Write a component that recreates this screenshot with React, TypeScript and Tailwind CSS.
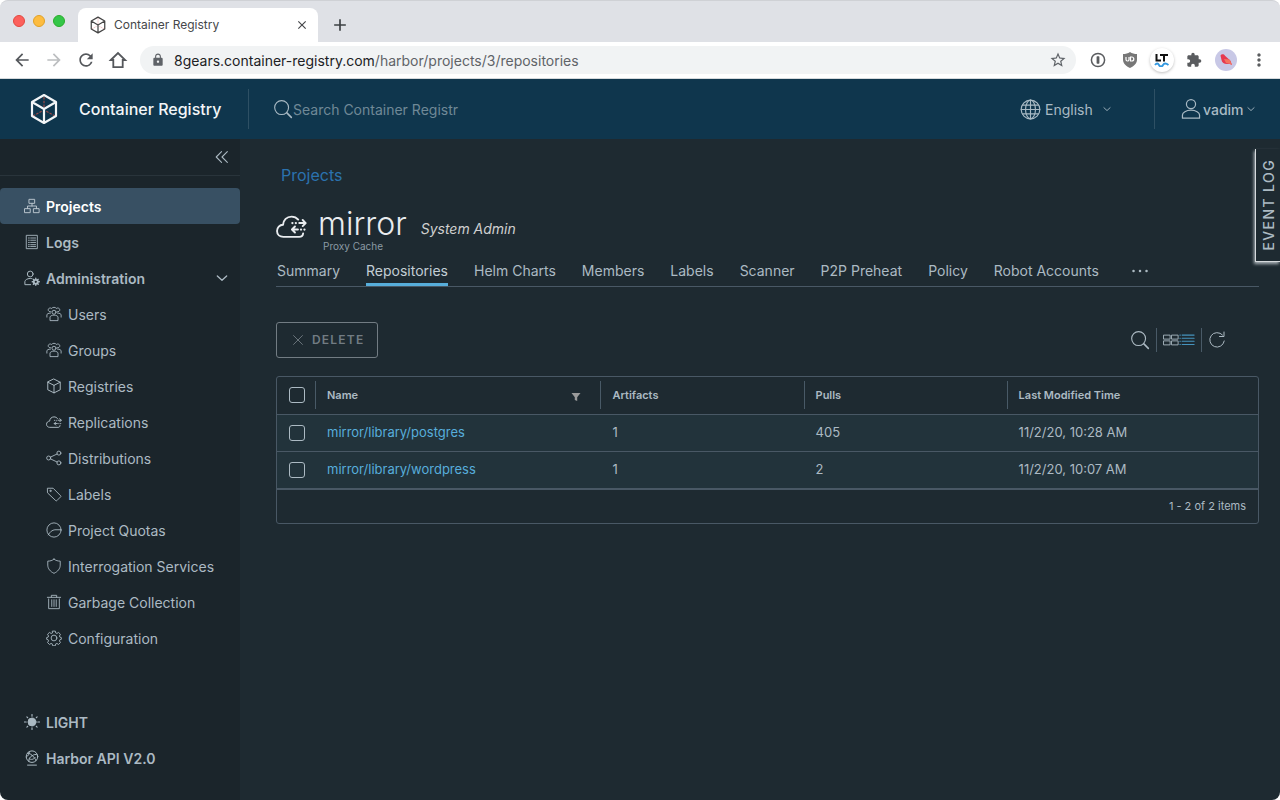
import type { ReactNode } from "react";
import {
  MdArrowBack,
  MdArrowForward,
  MdRefresh,
  MdLock,
  MdStarBorder,
  MdExtension,
  MdMoreVert,
  MdClose,
  MdAdd,
} from "react-icons/md";

type IconProps = { className?: string };

function Glyph({ className = "size-4", width = 2, children }: IconProps & { width?: number; children: ReactNode }) {
  return (
    <svg
      viewBox="0 0 36 36"
      className={`shrink-0 ${className}`}
      fill="none"
      stroke="currentColor"
      strokeWidth={width}
      strokeLinecap="round"
      strokeLinejoin="round"
      aria-hidden="true"
    >
      {children}
    </svg>
  );
}

const ProjectsIcon = () => (
  <Glyph width={2.2}>
    <path d="M12 3h12v9H12zM2 24h12v9H2zM22 24h12v9H22zM18 12v6M8 24v-6h20v6" />
  </Glyph>
);

const LogsIcon = () => (
  <Glyph>
    <path d="M6 3h24v30H6z" />
    <path d="M10 9h2M15 9h11M10 14h2M15 14h11M10 19h2M15 19h11M10 24h2M15 24h11M10 28h2M15 28h11" />
  </Glyph>
);

const AdminIcon = () => (
  <Glyph width={2.2}>
    <circle cx="14" cy="9" r="6.500" />
    <path d="M15 33H2v-7c0-3 5-7 12-7 1.500 0 2.500.2 4 .5" />
    <circle cx="26.500" cy="26.500" r="4.500" strokeWidth="4" />
    <path strokeWidth="3" d="M26.500 18.500v2M26.500 32.500v2M18.500 26.500h2M32.500 26.500h2M21 21l1.500 1.500M30.500 30.500L32 32M32 21l-1.500 1.500M22.500 30.500L21 32" />
  </Glyph>
);

const UsersIcon = () => (
  <Glyph>
    <circle cx="18" cy="14" r="4.500" />
    <path d="M9 32v-7c0-2 4-4.500 9-4.500s9 2.500 9 4.500v7z" />
    <path d="M11 13a4.500 4.500 0 1 1 1-8M25 13a4.500 4.500 0 1 0-1-8M13 5c2-3 8-3 10 0" />
    <path d="M2 25v-5c0-2 3-4 8-4M34 25v-5c0-2-3-4-8-4" />
  </Glyph>
);

const RegistryIcon = () => (
  <Glyph width={2.2}>
    <path d="M18 2.500L32 9.500v17L18 33.500 4 26.500v-17zM4 9.500l14 7 14-7M18 16.500v17" />
  </Glyph>
);

const CloudIcon = ({ className }: IconProps) => (
  <Glyph className={className} width={2.2}>
    <path d="M31.500 26c-.3 2.800-1.500 4-4.500 4H8.500C4.500 30 1.200 27.500 1.200 23.200c0-4 3-7.200 7-7.200C8.500 10.500 12.500 6.500 18 6.500c3.200 0 6 1.300 7.800 3.500" />
    <path d="M27 14h7M31 10.500l3.500 3.500-3.500 3.500M25.500 21.500H19M22 18l-3.500 3.500L22 25" />
    <path strokeWidth="2.600" d="M19 14h.1M23 14h.1M29 21.500h.1M33 21.500h.1" />
  </Glyph>
);

const ShareIcon = () => (
  <Glyph>
    <circle cx="6" cy="18" r="4.500" />
    <circle cx="29" cy="7" r="4.500" />
    <circle cx="29" cy="29" r="4.500" />
    <path d="M10 16l15-7M10 20l15 7" />
  </Glyph>
);

const TagIcon = () => (
  <Glyph>
    <path d="M4 5h12L33 22c.8.8.8 1.500 0 2.300L24.300 33c-.8.8-1.500.8-2.300 0L4 16z" />
    <circle cx="10" cy="11" r="1.500" />
  </Glyph>
);

const QuotaIcon = () => (
  <Glyph>
    <circle cx="18" cy="18" r="16" />
    <path d="M33 17.500H20C14 18 9 22 5 29" />
  </Glyph>
);

const ShieldIcon = () => (
  <Glyph>
    <path d="M18 2.500c4 3.500 9 4.500 14 4.500v9c0 8-5.500 14.500-14 18.500C9.500 30.500 4 24 4 16V7c5 0 10-1 14-4.500z" />
  </Glyph>
);

const TrashIcon = () => (
  <Glyph>
    <path d="M3 7.500h30M12 7V3h12v4M6 11v22h24V11M13 13v15M18 13v15M23 13v15" />
  </Glyph>
);

const GearIcon = () => (
  <Glyph>
    <circle cx="18" cy="18" r="6.500" />
    <path d="M15 2.500h6l1 4.300 2.500 1 3.800-2.300 4.200 4.200-2.300 3.800 1 2.500 3.300 1v4l-3.300 1-1 2.500 2.300 3.800-4.200 4.200-3.800-2.300-2.500 1-1 4.300h-6l-1-4.300-2.500-1-3.800 2.300-4.200-4.200 2.300-3.800-1-2.500-3.300-1v-4l3.300-1 1-2.500-2.300-3.800 4.200-4.200 3.800 2.300 2.500-1z" />
  </Glyph>
);

const SunIcon = () => (
  <Glyph>
    <circle cx="18" cy="18" r="9" fill="currentColor" />
    <path strokeWidth="2.500" d="M18 1v4M18 31v4M1 18h4M31 18h4M6.500 6.500l2 2M27.500 27.500l2 2M29.500 6.500l-2 2M8.500 27.500l-2 2" />
  </Glyph>
);

const ApiIcon = () => (
  <Glyph width={2.2}>
    <circle cx="18" cy="15" r="13" />
    <path d="M8 7c5 0 10 4 14 9s5 7 5 8M11 26c-1-6 2-10 7-13s8-4 12-2M12 4c0 5-2 9-7 12M12 20c4 2 9 2 13-3M8 34h20" />
  </Glyph>
);

const Chevron = ({ className }: IconProps) => (
  <Glyph className={className} width={4}>
    <path d="M4 12l14 13 14-13" />
  </Glyph>
);

const SearchIcon = ({ className }: IconProps) => (
  <Glyph className={className}>
    <circle cx="15.500" cy="15.500" r="12.500" />
    <path strokeWidth="2.800" d="M25 25l8 8" />
  </Glyph>
);

const GlobeIcon = () => (
  <Glyph className="size-[21px]">
    <circle cx="18" cy="18" r="16" />
    <ellipse cx="18" cy="18" rx="8.500" ry="16" />
    <path d="M18 2v32M2 18h32M4.500 10.500h27M4.500 25.500h27" />
  </Glyph>
);

const CubeLogo = ({ className, accent }: { className: string; accent: string }) => (
  <svg viewBox="0 0 28 32" className={`shrink-0 ${className}`} fill="none" aria-hidden="true">
    <path d="M14 4v11M3 23l9-5M25 23l-9-5" stroke={accent} strokeWidth="1.200" strokeDasharray="2.500 1.200" />
    <path d="M14 2l12 7v14l-12 7-12-7V9zM2 9l12 7 12-7M14 16v14" stroke="currentColor" strokeWidth="2.200" strokeLinejoin="round" />
  </svg>
);

function BrowserChrome() {
  return (
    <div className="shrink-0 bg-white">
      <div className="flex h-[42px] items-end rounded-t-lg border-t border-[#cfd1d5] bg-[#dfe1e6]">
        <div className="mb-[15px] ml-[13px] flex gap-2">
          <span className="size-3 rounded-full border border-[#e2483f] bg-[#fc605c]" />
          <span className="size-3 rounded-full border border-[#e0a127] bg-[#fdbc40]" />
          <span className="size-3 rounded-full border border-[#2aad2a] bg-[#34c648]" />
        </div>
        <div className="ml-[13px] flex h-[34px] w-60 items-center rounded-t-lg bg-white pr-[9px] pl-3">
          <CubeLogo className="h-[18px] w-4 text-[#444]" accent="#e8a0a0" />
          <span className="ml-2 flex-1 text-[12px] text-[#45474a]">Container Registry</span>
          <button type="button" aria-label="Close tab" className="text-[#45474a]">
            <MdClose className="size-3.5" />
          </button>
        </div>
        <button type="button" aria-label="New tab" className="mb-[7px] ml-3 text-[#3c4043]">
          <MdAdd className="size-5" />
        </button>
      </div>
      <div className="flex h-[37px] items-center border-b border-[#d5d9dc] pr-[11px] pl-3">
        <div className="flex items-center gap-3 text-[#55585c]">
          <button type="button" aria-label="Back"><MdArrowBack className="size-5" /></button>
          <button type="button" aria-label="Forward" className="text-[#bcbec0]"><MdArrowForward className="size-5" /></button>
          <button type="button" aria-label="Reload"><MdRefresh className="size-5" /></button>
          <button type="button" aria-label="Home">
            <svg viewBox="0 0 20 20" className="size-5" fill="none" stroke="currentColor" strokeWidth="1.800" aria-hidden="true">
              <path d="M2.800 10L10 3l7.200 7H14.700v7.200H5.300V10z" />
            </svg>
          </button>
        </div>
        <div className="ml-3 flex h-7 flex-1 items-center rounded-full bg-[#f1f3f4] pr-[9px] pl-[11px] text-[#5f6368]">
          <MdLock className="size-3.5 shrink-0" />
          <span className="ml-[9px] flex-1 text-[14px] text-[#5f6368]">
            <span className="text-[#202124]">8gears.container-registry.com</span>/harbor/projects/3/repositories
          </span>
          <button type="button" aria-label="Bookmark"><MdStarBorder className="size-[18px]" /></button>
        </div>
        <div className="ml-3.5 flex items-center text-[#5a5c5f]">
          <svg viewBox="0 0 16 16" className="size-4" fill="none" aria-hidden="true">
            <circle cx="8" cy="8" r="6.600" stroke="currentColor" strokeWidth="1.500" />
            <rect x="6.600" y="4.300" width="2.800" height="7.400" rx=".6" fill="currentColor" />
          </svg>
          <svg viewBox="0 0 16 16" className="ml-4 size-4" aria-hidden="true">
            <path d="M8 0c2 1.500 4.500 2 7 2v5.500c0 4-3 6.500-7 8.500-4-2-7-4.500-7-8.500V2c2.500 0 5-.5 7-2z" fill="#777" />
            <path d="M4 5v2.500a1.500 1.500 0 0 0 3 0V5M8.500 5v4h1.300a2 2 0 0 0 0-4z" stroke="#fff" strokeWidth="1.200" fill="none" />
          </svg>
          <span className="ml-3 flex size-6 items-center justify-center rounded-full bg-white shadow-[0_1px_3px_#00000040]">
            <svg viewBox="0 0 16 14" className="h-3.5 w-4" fill="none" aria-hidden="true">
              <path d="M2.500 1v6.500H7M6 2h8M10 2v6.500" stroke="#111" strokeWidth="2" />
              <path d="M1 12c1.500-2 3-2 4 0s3 2 4 0 3-2 5.500 0" stroke="#3398e0" strokeWidth="1.800" />
            </svg>
          </span>
          <MdExtension className="ml-3 size-4" />
          <svg viewBox="0 0 22 22" className="ml-[13px] size-[22px]" aria-hidden="true">
            <circle cx="11" cy="11" r="11" fill="#c8c8e6" />
            <path d="M5.500 6.500C6.500 4.800 9 5 10 6.800l5.500 5L17 16l-2.500-1.200L12 15c-3 0-5-1.500-5.500-4z" fill="#e63950" />
            <path d="M9 10l5.500.5L17 16l-3-1.500-3-.5z" fill="#f4725f" />
          </svg>
          <button type="button" aria-label="Menu" className="ml-3"><MdMoreVert className="size-5" /></button>
        </div>
      </div>
    </div>
  );
}

function AppHeader() {
  return (
    <header className="flex h-[60px] shrink-0 items-center bg-[#0f364d] text-[#a9bac4]">
      <div className="flex h-10 w-[249px] items-center border-r border-[#2e5064] pl-[30px] text-[#f3f6f8]">
        <CubeLogo className="h-8 w-7" accent="#9c4a48" />
        <h1 className="ml-[21px] text-[16px] leading-6 font-medium">Container Registry</h1>
      </div>
      <label className="ml-6 flex flex-1 items-center">
        <SearchIcon className="size-5" />
        <input
          type="text"
          aria-label="Search"
          placeholder="Search Container Registr"
          className="w-48 bg-transparent text-[14px] outline-none placeholder:text-[#6f8997]"
        />
      </label>
      <button type="button" aria-haspopup="menu" className="flex h-10 w-[134px] items-center text-[14px]">
        <GlobeIcon />
        <span className="ml-1">English</span>
        <Chevron className="ml-2.5 size-2" />
      </button>
      <button type="button" aria-haspopup="menu" className="flex h-10 w-[126px] items-center border-l border-[#2e5064] pl-[25px] text-[14px] font-medium">
        <Glyph className="size-[22px]">
          <circle cx="18" cy="10" r="7.500" />
          <path d="M4 33v-5c0-4 6-8 14-8s14 4 14 8v5z" />
        </Glyph>
        <span className="ml-px">vadim</span>
        <Chevron className="ml-[3px] size-2" />
      </button>
    </header>
  );
}

const adminItems = [
  { label: "Users", icon: <UsersIcon /> },
  { label: "Groups", icon: <UsersIcon /> },
  { label: "Registries", icon: <RegistryIcon /> },
  { label: "Replications", icon: <CloudIcon /> },
  { label: "Distributions", icon: <ShareIcon /> },
  { label: "Labels", icon: <TagIcon /> },
  { label: "Project Quotas", icon: <QuotaIcon /> },
  { label: "Interrogation Services", icon: <ShieldIcon /> },
  { label: "Garbage Collection", icon: <TrashIcon /> },
  { label: "Configuration", icon: <GearIcon /> },
];

function Sidebar() {
  return (
    <nav aria-label="Main" className="flex w-60 shrink-0 flex-col rounded-bl-lg bg-[#1b252b] pb-6 text-[14px] text-[#acbac3]">
      <div className="flex h-[37px] items-center justify-end border-b border-[#29343b] pr-2.5">
        <button type="button" aria-label="Collapse">
          <Glyph width={2.4}>
            <path d="M17 6L5 18l12 12M30 6L18 18l12 12" />
          </Glyph>
        </button>
      </div>
      <ul className="mt-3 font-semibold">
        <li>
          <a href="#projects" aria-current="page" className="flex h-9 items-center gap-1.5 rounded bg-[#385063] pl-6 text-white">
            <span className="text-[#b9c5ce]"><ProjectsIcon /></span>
            Projects
          </a>
        </li>
        <li>
          <a href="#logs" className="flex h-9 items-center gap-1.5 pl-6">
            <LogsIcon />
            Logs
          </a>
        </li>
        <li>
          <button type="button" aria-expanded="true" className="flex h-9 w-full items-center gap-1.5 pr-3 pl-6">
            <AdminIcon />
            <span className="flex-1 text-left">Administration</span>
            <Chevron className="size-3" />
          </button>
          <ul className="font-normal">
            {adminItems.map((item) => (
              <li key={item.label}>
                <a href={`#${item.label.toLowerCase().replace(" ", "-")}`} className="flex h-9 items-center gap-1.5 pl-[46px]">
                  {item.icon}
                  {item.label}
                </a>
              </li>
            ))}
          </ul>
        </li>
      </ul>
      <div className="mt-auto font-semibold">
        <button type="button" className="flex h-9 items-center gap-1.5 pl-6">
          <SunIcon />
          LIGHT
        </button>
        <a href="#api" className="flex h-9 items-center gap-1.5 pl-6">
          <ApiIcon />
          Harbor API V2.0
        </a>
      </div>
    </nav>
  );
}

const tabs = [
  "Summary",
  "Repositories",
  "Helm Charts",
  "Members",
  "Labels",
  "Scanner",
  "P2P Preheat",
  "Policy",
  "Robot Accounts",
];

const repositories = [
  { name: "mirror/library/postgres", artifacts: 1, pulls: 405, modified: "11/2/20, 10:28 AM" },
  { name: "mirror/library/wordpress", artifacts: 1, pulls: 2, modified: "11/2/20, 10:07 AM" },
];

function Tick({ label }: { label: string }) {
  return (
    <input
      type="checkbox"
      aria-label={label}
      className="block size-4 appearance-none rounded-[3px] border border-[#acbac3] checked:bg-[#49afd9]"
    />
  );
}

function HeadCell({ children }: { children: ReactNode }) {
  return (
    <th scope="col" className="p-0 text-left font-semibold">
      <div className="flex h-7 items-center border-l border-[#495a67] pr-[19px] pl-[11px]">{children}</div>
    </th>
  );
}

function RepositoryTable() {
  return (
    <div className="mt-[18px] overflow-hidden rounded-[3px] border border-[#495865]">
      <table className="w-full table-fixed border-collapse text-[13px]">
        <colgroup>
          <col className="w-[38px]" />
          <col className="w-[29.1%]" />
          <col className="w-[20.7%]" />
          <col className="w-[20.7%]" />
          <col />
        </colgroup>
        <thead className="text-[11px]">
          <tr className="h-[37px]">
            <th scope="col" className="py-0 pr-0 pl-3"><Tick label="Select all" /></th>
            <HeadCell>
              <span className="flex-1">Name</span>
              <button type="button" aria-label="Filter by name" className="mt-1 text-[#9a9a9a]">
                <svg viewBox="0 0 10 10" className="size-2.5" fill="currentColor" aria-hidden="true">
                  <path d="M.5 1h9L6.200 5.200V9L3.800 8V5.200z" />
                </svg>
              </button>
            </HeadCell>
            <HeadCell>Artifacts</HeadCell>
            <HeadCell>Pulls</HeadCell>
            <HeadCell>Last Modified Time</HeadCell>
          </tr>
        </thead>
        <tbody className="bg-[#22333b]">
          {repositories.map((repo) => (
            <tr key={repo.name} className="h-[37px] border-t border-[#495865]">
              <td className="py-0 pr-0 pl-3"><Tick label={`Select ${repo.name}`} /></td>
              <td className="py-0 pl-3">
                <a href={`#${repo.name}`} className="text-[#57aedb]">{repo.name}</a>
              </td>
              <td className="py-0 pl-3">{repo.artifacts}</td>
              <td className="py-0 pl-3">{repo.pulls}</td>
              <td className="py-0 pl-3">{repo.modified}</td>
            </tr>
          ))}
        </tbody>
      </table>
      <div className="flex h-[35px] items-center justify-end border-t-2 border-[#495865] pr-3 text-[11px]">1 - 2 of 2 items</div>
    </div>
  );
}

function Main() {
  return (
    <main className="min-w-0 flex-1 rounded-br-lg bg-[#1e2a31] pt-6 pr-[21px] pl-9 text-[#acbac3]">
      <a href="#projects" className="ml-[5px] inline-block text-[16px] leading-6 text-[#2b72ae]">Projects</a>

      <div className="mt-4 flex items-start">
        <span className="mt-2 text-[#e9ecef]"><CloudIcon className="size-[31px]" /></span>
        <div className="ml-[11px] pt-[5px]">
          <h2 className="text-[32px] leading-8 font-light text-[#e9ecef]">mirror</h2>
          <p className="ml-[5px] text-[10px] leading-3 text-[#8b9aa4]">Proxy Cache</p>
        </div>
        <em className="mt-4 ml-3.5 text-[14px] leading-5 text-[#cfcfcf]">System Admin</em>
      </div>

      <div role="tablist" className="mt-[3px] flex h-8 items-stretch gap-[26px] border-b border-[#495865] pl-px text-[14px] whitespace-nowrap">
        {tabs.map((tab) => (
          <button
            key={tab}
            type="button"
            role="tab"
            aria-selected={tab === "Repositories"}
            className={
              tab === "Repositories"
                ? "border-b-3 border-[#57aedb] pt-0.5 text-[#c3ced5]"
                : "border-b-3 border-transparent pt-0.5"
            }
          >
            {tab}
          </button>
        ))}
        <button type="button" aria-label="More tabs" className="pl-1.5">
          <Glyph className="size-[18px]">
            <path strokeWidth="5" d="M5 18h.1M18 18h.1M31 18h.1" />
          </Glyph>
        </button>
      </div>

      <div className="mt-[35px] flex items-center justify-between">
        <button
          type="button"
          disabled
          className="flex h-9 items-center gap-1.5 rounded-[3px] border border-[#727c83] px-[13px] text-[12px] font-semibold tracking-widest text-[#727c83]"
        >
          <Glyph>
            <path d="M8 8l20 20M28 8L8 28" />
          </Glyph>
          DELETE
        </button>
        <div className="mr-[33px] flex items-center">
          <button type="button" aria-label="Search"><SearchIcon className="size-5" /></button>
          <div className="ml-1.5 flex h-6 items-center border-x border-[#495a67] px-1.5">
            <button type="button" aria-label="Card view">
              <Glyph>
                <path d="M2 7h14v9H2zM20 7h14v9H20zM2 20h14v9H2zM20 20h14v9H20z" />
              </Glyph>
            </button>
            <button type="button" aria-label="List view" aria-pressed="true" className="text-[#4593bd]">
              <Glyph width={2.4}>
                <path d="M2 7h1M7 7h27M2 14h1M7 14h27M2 21h1M7 21h27M2 28h1M7 28h27" />
              </Glyph>
            </button>
          </div>
          <button type="button" aria-label="Refresh" className="ml-1.5">
            <Glyph className="size-[18px]">
              <path d="M29 8A14.500 14.500 0 1 0 32.500 20M32 2v9h-9" />
            </Glyph>
          </button>
        </div>
      </div>

      <RepositoryTable />
    </main>
  );
}

export default function App() {
  return (
    <div className="flex min-h-screen flex-col bg-white font-['Inter','Liberation_Sans',sans-serif]">
      <BrowserChrome />
      <AppHeader />
      <div className="relative flex flex-1">
        <Sidebar />
        <Main />
        <button
          type="button"
          className="absolute top-2.5 right-0 flex h-[113px] w-[25px] items-center justify-center border-b border-l border-[#d5d9dc] bg-[#1e2a31] text-[14px] font-medium tracking-widest text-[#acbac3] shadow-[-1px_2px_3px_#aab3b8]"
        >
          <span className="rotate-180 [writing-mode:vertical-rl]">EVENT LOG</span>
        </button>
      </div>
    </div>
  );
}
